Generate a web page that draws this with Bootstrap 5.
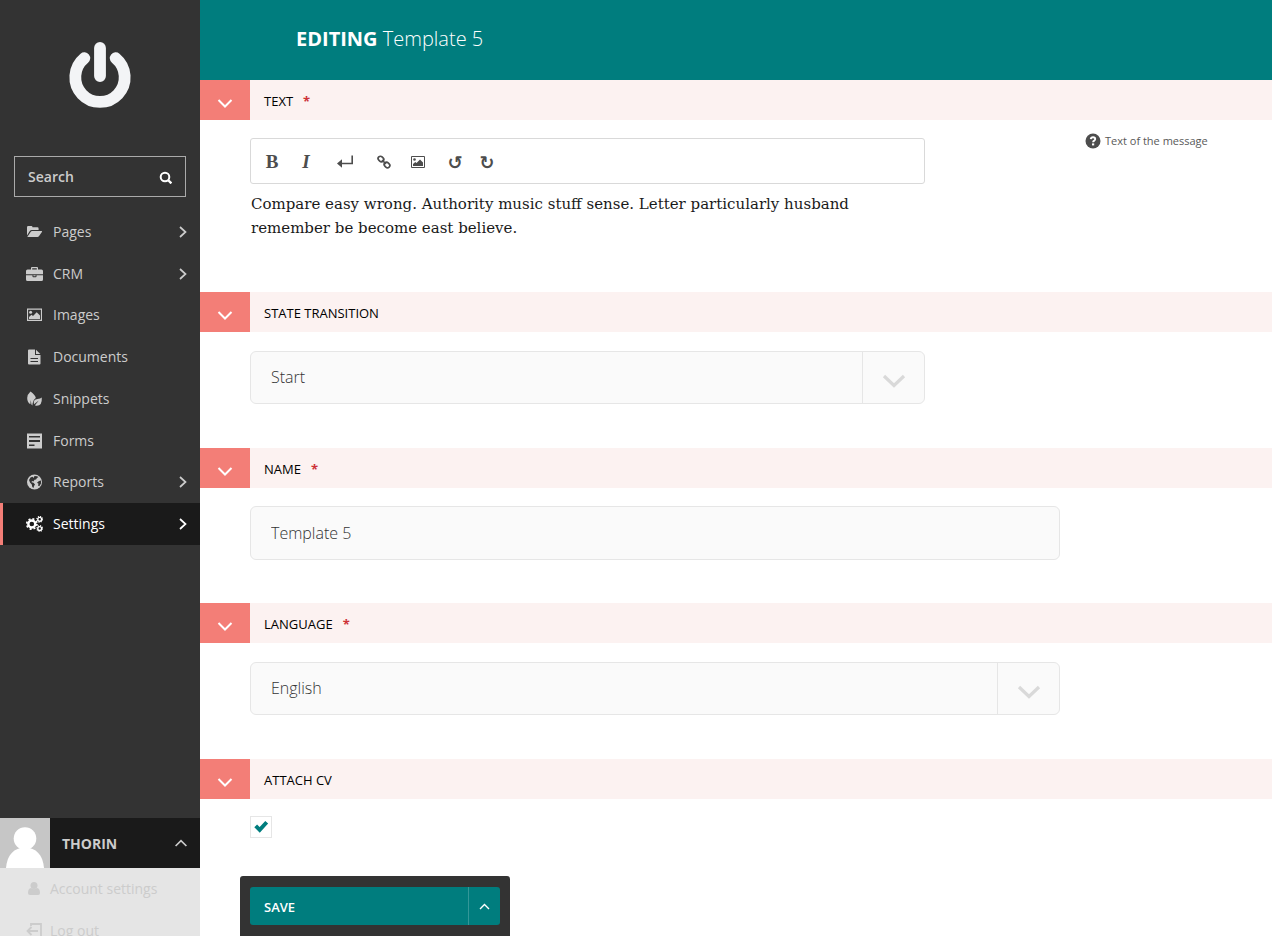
<!DOCTYPE html>
<html lang="en">
<head>
<meta charset="utf-8">
<meta name="viewport" content="width=device-width, initial-scale=1">
<title>Editing Template 5</title>
<link href="https://cdn.jsdelivr.net/npm/bootstrap@5.3.0/dist/css/bootstrap.min.css" rel="stylesheet">
<style>
  :root { --teal: #007d7e; --salmon: #f37e77; --dark: #333; --darker: #1a1a1a; --line: #e6e6e6; }
  body { font-family: "Open Sans", sans-serif; font-size: 14px; line-height: 20px; color: #333; background: #fff; }
  svg { display: block; flex: none; }
  .chev { fill: none; stroke: currentColor; stroke-width: 2; }

  .sidebar { width: 200px; height: 100vh; background: var(--dark); color: #ccc; overflow: hidden; }
  .brand { padding: 40px 0 46px; }
  .search-box { border: 1px solid #aaa; height: 41px; margin: 0 14px 14px; padding: 0 13px; }
  .search-box input { background: none; border: 0; outline: 0; color: #ccc; font-weight: 600; min-width: 0; padding: 0; }
  .search-box input::placeholder { color: #ccc; opacity: 1; }
  .search-box button { background: none; border: 0; padding: 0; color: #fff; }
  .main-menu { height: 334px; }
  .menu-link { color: #ccc; text-decoration: none; border-left: 3px solid transparent; padding: 0 13px 0 23px; gap: 10px; }
  .menu-link .chev { stroke-width: 1.700; }
  .menu-link.current { color: #fff; background: var(--darker); border-color: var(--salmon); }
  .account { height: 118px; background: #e5e5e5; overflow: hidden; }
  .account-toggle { height: 50px; background: var(--darker); color: #ccc; border: 0; padding: 0 13px 0 0; gap: 12px; font-weight: 700; }
  .account-toggle span { padding-top: 2px; }
  .account-toggle .chev { stroke-width: 1.700; }
  .account-link { height: 42px; color: #ccc; text-decoration: none; padding-left: 26px; gap: 8px; }

  .content { min-height: 100vh; min-width: 0; }
  .page-head { height: 80px; background: var(--teal); color: #fff; padding: 0 96px 2px; }
  .page-head h1 { font-size: 20px; line-height: 28px; font-weight: 300; }
  .page-head strong { font-weight: 700; }
  .section-head { height: 40px; background: #fcf2f1; color: #000; font-size: 13px; }
  .section-toggle { width: 50px; height: 40px; background: var(--salmon); color: #fff; border: 0; padding: 6px 0 0; }
  .section-title { font-size: 13px; line-height: 20px; font-weight: 400; padding-left: 14px; padding-top: 1px; }
  .required { color: #cd3238; font-weight: 700; margin-left: 10px; }
  .section-body { padding: 18px 50px 43px; }
  .field { width: 100%; height: 54px; border: 1px solid var(--line); border-radius: 6px; background: #fafafa; color: #333; font-size: 16px; font-weight: 300; padding: 0 20px 1px; outline: 0; }
  .select-wrap { padding: 1px 0; }
  .select-wrap .field { height: 53px; appearance: none; }
  .select-arrow { top: 2px; right: 1px; bottom: 2px; width: 62px; border-left: 1px solid var(--line); color: #d9d9d9; padding-top: 7px; pointer-events: none; }
  .toolbar { height: 46px; border: 1px solid #d9d9d9; border-radius: 3px; padding: 2px 4px 0; color: #4d4d4d; }
  .toolbar button { background: none; border: 0; padding: 0; width: 34px; height: 34px; color: inherit; }
  .toolbar .wide { width: 44px; }
  .toolbar .history { width: 32px; font: 700 18px/36px "DejaVu Sans", sans-serif; }
  .toolbar .glyph { font: 700 19px/34px "Liberation Serif", serif; }
  .editor { font-family: "DejaVu Serif", serif; font-size: 15px; line-height: 24px; color: #1a1a1a; padding: 8px 50px 9px 1px; outline: 0; }
  .help { font-size: 11px; line-height: 16px; color: #595959; padding: 0 0 0 25px; margin-top: -5px; gap: 4px; }
  .tick { appearance: none; width: 22px; height: 22px; border: 1px solid var(--line); background: #fff; display: block; margin: -1px 0 0; }
  .tick:checked { background: #fff url("data:image/svg+xml,%3Csvg xmlns='http://www.w3.org/2000/svg' viewBox='0 0 20 20'%3E%3Cpath d='M4.700 8.900l4 4 7-7.600' fill='none' stroke='%23007d7e' stroke-width='3.900'/%3E%3C/svg%3E") center/20px no-repeat; }
  .save-bar { width: 270px; height: 60px; margin-left: 40px; background: var(--dark); border-radius: 3px 3px 0 0; padding: 11px 10px; }
  .save-bar button { height: 38px; background: var(--teal); color: #fff; border: 0; font-size: 13px; font-weight: 600; }
  .save-main { padding: 1px 14px 0; border-radius: 3px 0 0 3px; }
  .save-bar .save-more { width: 32px; padding: 0; border-left: 1px solid #339798; border-radius: 0 3px 3px 0; }
</style>
</head>
<body class="d-flex align-items-start">

<aside class="sidebar d-flex flex-column flex-shrink-0">
  <a class="brand d-flex justify-content-center" href="#" aria-label="Dashboard">
    <svg width="70" height="70" viewBox="0 0 70 70" fill="none" stroke="#f3f4f6" stroke-width="11.800" stroke-linecap="round"><path d="M35 8V36M19.300 18.200A24.700 24.700 0 1 0 50.700 18.200"/></svg>
  </a>
  <form class="search-box d-flex align-items-center">
    <input class="flex-fill" type="text" placeholder="Search" aria-label="Search">
    <button type="button" aria-label="Search"><svg width="13" height="14" viewBox="0 0 13 14" fill="none" stroke="currentColor" stroke-width="2"><circle cx="6" cy="7" r="4.300"/><path d="M9 10l3.400 3.400" stroke-width="2.400"/></svg></button>
  </form>

  <nav class="main-menu d-flex flex-column" aria-label="Main">
    <a class="menu-link d-flex flex-fill align-items-center" href="#">
      <svg width="17" height="16" viewBox="0 0 17 16" fill="currentColor"><path d="M1 11.500V3.300Q1 2 2.200 2H5.400Q6.500 2 6.500 3.200H11.400Q12.600 3.200 12.600 4.400V6H5.800Q4.600 6 3.800 7ZM1.300 13L4.600 7.900Q5.200 7 6.200 7H15.500Q16.500 7 15.900 8L13.100 12Q12.400 13 11.400 13Z"/></svg>
      <span class="flex-fill">Pages</span>
      <svg class="chev" width="8" height="12" viewBox="0 0 8 12"><path d="M1 1l5.500 5L1 11"/></svg>
    </a>
    <a class="menu-link d-flex flex-fill align-items-center" href="#">
      <svg width="17" height="16" viewBox="0 0 17 16" fill="currentColor"><path fill-rule="evenodd" d="M5 3.500V2Q5 1 6 1H11Q12 1 12 2V3.500H15.500Q17 3.500 17 5V8.300H0V5Q0 3.500 1.500 3.500ZM6.200 2.200V3.500H10.800V2.200ZM0 9.200H6.500V10.500Q6.500 11.200 7.300 11.200H9.700Q10.500 11.200 10.500 10.500V9.200H17V13.500Q17 15 15.500 15H1.500Q0 15 0 13.500ZM7.400 9.200H9.600V10.300H7.400Z"/></svg>
      <span class="flex-fill">CRM</span>
      <svg class="chev" width="8" height="12" viewBox="0 0 8 12"><path d="M1 1l5.500 5L1 11"/></svg>
    </a>
    <a class="menu-link d-flex flex-fill align-items-center" href="#">
      <svg width="17" height="16" viewBox="0 0 17 16" fill="currentColor"><path fill-rule="evenodd" d="M1 1.500H16V14H1ZM2.100 2.700V12.800H14.900V2.700Z"/><circle cx="4.600" cy="5.200" r="1.500"/><path d="M3 12V10L5.500 7.800L7 9L10.700 5.200L14 8.500V12Z"/></svg>
      <span class="flex-fill">Images</span>
    </a>
    <a class="menu-link d-flex flex-fill align-items-center" href="#">
      <svg width="17" height="16" viewBox="0 0 17 16" fill="currentColor"><path fill-rule="evenodd" d="M2 1.500Q2 .5 3 .5H9V6H14.500V14.500Q14.500 15.500 13.500 15.500H3Q2 15.500 2 14.500ZM4.500 9V10H12V9ZM4.500 12V13H12V12Z"/><path d="M10 .7L14.300 5H10Z"/></svg>
      <span class="flex-fill">Documents</span>
    </a>
    <a class="menu-link d-flex flex-fill align-items-center" href="#">
      <svg width="17" height="16" viewBox="0 0 17 16" fill="currentColor"><path d="M4.500 .5Q9.500 4 9.800 7Q7 9 6.700 12L6.400 14.500L5.400 13.500L4.800 9L4.400 13.200Q1.200 11.500 1.200 7Q1.200 3.500 4.500 .5Z"/><path d="M15.800 6.500Q16.300 14.800 10.800 14.800Q9.700 14.800 9 14.200L12.800 9.500L8 13.300Q6.800 8.300 11.500 8Q14.500 7.900 15.800 6.500Z"/></svg>
      <span class="flex-fill">Snippets</span>
    </a>
    <a class="menu-link d-flex flex-fill align-items-center" href="#">
      <svg width="17" height="16" viewBox="0 0 17 16" fill="currentColor"><path fill-rule="evenodd" d="M1 .5H16V15.500H1ZM3 3V4.500H14V3ZM3 7V9H14V7ZM3 11.500V13H8.500V11.500Z"/></svg>
      <span class="flex-fill">Forms</span>
    </a>
    <a class="menu-link d-flex flex-fill align-items-center" href="#">
      <svg width="17" height="16" viewBox="0 0 17 16"><circle cx="8.500" cy="8" r="7.500" fill="currentColor"/><path fill="#333" d="M8.500 2L11 2.200L12.500 3L11 4L10 5.500L8.500 5.800L7.500 7.500L6 7L5.500 8.300L7.500 8.800L9 10.500L8 12L7.500 14L6.300 13L5.800 10.500L4 8.500L3 6L4.500 3.500L6.500 2.800L7.500 4ZM13 7L15 6.500L15 9.500L13.300 12.300L12 11.500L12.500 9.800L11 8.800Z"/></svg>
      <span class="flex-fill">Reports</span>
      <svg class="chev" width="8" height="12" viewBox="0 0 8 12"><path d="M1 1l5.500 5L1 11"/></svg>
    </a>
    <a class="menu-link current d-flex flex-fill align-items-center" href="#" aria-current="page">
      <svg width="17" height="16" viewBox="0 0 17 16" fill="none" stroke="currentColor"><circle cx="5.800" cy="8" r="3.500" stroke-width="2.400"/><circle cx="5.800" cy="8" r="5.100" stroke-width="1.700" stroke-dasharray="2 2.006"/><circle cx="13.700" cy="3.300" r="1.900" stroke-width="1.400"/><circle cx="13.700" cy="3.300" r="2.800" stroke-width="1.200" stroke-dasharray="1.100 1.100"/><circle cx="13.700" cy="12.500" r="1.900" stroke-width="1.400"/><circle cx="13.700" cy="12.500" r="2.800" stroke-width="1.200" stroke-dasharray="1.100 1.100"/></svg>
      <span class="flex-fill">Settings</span>
      <svg class="chev" width="8" height="12" viewBox="0 0 8 12"><path d="M1 1l5.500 5L1 11"/></svg>
    </a>
  </nav>

  <div class="account mt-auto">
    <button class="account-toggle d-flex align-items-center w-100 text-start" type="button" aria-expanded="true">
      <svg width="50" height="50" viewBox="0 0 50 50"><path fill="#c6c6c6" d="M0 0H50V50H0Z"/><circle cx="25" cy="20.500" r="11.300" fill="#fff"/><path fill="#fff" d="M6 50C7 37 14 29.500 25 29.500S43 37 44 50Z"/></svg>
      <span class="flex-fill">THORIN</span>
      <svg class="chev" width="12" height="8" viewBox="0 0 12 8"><path d="M.6 7L6 1.700L11.400 7"/></svg>
    </button>
    <a class="account-link d-flex align-items-center" href="#">
      <svg width="16" height="16" viewBox="0 0 16 16" fill="currentColor"><circle cx="8" cy="4.500" r="3.500"/><path d="M5 7Q8 9.300 11 7Q14 7.500 14 12Q14 14 12 14H4Q2 14 2 12Q2 7.500 5 7Z"/></svg>
      Account settings
    </a>
    <a class="account-link d-flex align-items-center" href="#">
      <svg width="16" height="16" viewBox="0 0 16 16" fill="none" stroke="currentColor" stroke-width="1.800"><path d="M5 3V1H15V15H5V13M12 8H2M5.500 4L1.500 8l4 4"/></svg>
      Log out
    </a>
  </div>
</aside>

<main class="content d-flex flex-column flex-fill">
  <header class="page-head d-flex align-items-center">
    <h1 class="m-0"><strong>EDITING</strong> Template 5</h1>
  </header>

  <form class="d-flex flex-column flex-fill">
    <section>
      <div class="section-head d-flex align-items-center">
        <button class="section-toggle d-flex align-items-center justify-content-center" type="button" aria-label="Toggle text"><svg class="chev" width="16" height="9" viewBox="0 0 16 9"><path d="M1.500 1l6.500 6.500L14.500 1"/></svg></button>
        <h2 class="section-title m-0" id="text-label">TEXT<span class="required">*</span></h2>
      </div>
      <div class="section-body row g-0">
        <div class="col-10">
          <div class="row g-0"><div class="col-10">
            <div class="toolbar d-flex align-items-center" role="toolbar" aria-label="Formatting">
              <button class="glyph" type="button" aria-label="Bold">B</button>
              <button class="glyph fst-italic" type="button" aria-label="Italic">I</button>
              <button class="wide d-flex align-items-center justify-content-center" type="button" aria-label="Line break"><svg width="16" height="14" viewBox="0 0 16 14"><path d="M15.200 .5V8.500H4" fill="none" stroke="currentColor" stroke-width="1.600"/><path d="M0 8.500L5 4.300V12.700Z" fill="currentColor"/></svg></button>
              <button class="d-flex align-items-center justify-content-center" type="button" aria-label="Link"><svg width="14" height="14" viewBox="0 0 14 14" fill="none" stroke="currentColor" stroke-width="1.700"><rect x="1" y="1.800" width="6" height="4.600" rx="2.300" transform="rotate(45 4 4)"/><rect x="7" y="7.700" width="6" height="4.600" rx="2.300" transform="rotate(45 10 10)"/><path d="M5 5L9 9"/></svg></button>
              <button class="d-flex align-items-center justify-content-center" type="button" aria-label="Image"><svg width="14" height="12" viewBox="0 0 14 12" fill="currentColor"><path fill-rule="evenodd" d="M1 0H13Q14 0 14 1V11Q14 12 13 12H1Q0 12 0 11V1Q0 0 1 0ZM1 1V11H13V1Z"/><circle cx="3.500" cy="3.500" r="1.300"/><path d="M2 10V8L4.300 6L5.500 7L9 3.500L12 6.500V10Z"/></svg></button>
              <button class="history ms-1" type="button" aria-label="Undo">↺</button>
              <button class="history" type="button" aria-label="Redo">↻</button>
            </div>
            <div class="editor" contenteditable="true" role="textbox" aria-multiline="true" aria-labelledby="text-label" spellcheck="false">Compare easy wrong. Authority music stuff sense. Letter particularly husband remember be become east believe.</div>
          </div></div>
        </div>
        <div class="col-2">
          <p class="help d-flex align-items-center mb-0"><svg width="16" height="16" viewBox="0 0 16 16"><circle cx="8" cy="8" r="7.500" fill="#4d4d4d"/><path d="M5.800 6.200Q6 4.300 8 4.300Q10.200 4.300 10.200 6Q10.200 7 9.200 7.600Q8.100 8.200 8.100 9.300" fill="none" stroke="#fff" stroke-width="1.900"/><path d="M7 10.400H9.200V12.400H7Z" fill="#fff"/></svg><span class="text-nowrap">Text of the message</span></p>
        </div>
      </div>
    </section>

    <section>
      <div class="section-head d-flex align-items-center">
        <button class="section-toggle d-flex align-items-center justify-content-center" type="button" aria-label="Toggle state transition"><svg class="chev" width="16" height="9" viewBox="0 0 16 9"><path d="M1.500 1l6.500 6.500L14.500 1"/></svg></button>
        <label class="section-title" for="state">STATE TRANSITION</label>
      </div>
      <div class="section-body row g-0">
        <div class="col-10"><div class="row g-0"><div class="col-10 select-wrap position-relative">
          <select class="field d-block" id="state"><option>Start</option></select>
          <span class="select-arrow position-absolute d-flex align-items-center justify-content-center"><svg class="chev" width="24" height="15" viewBox="0 0 24 15"><path d="M2 2l10 9.500L22 2" stroke-width="3.200"/></svg></span>
        </div></div></div>
      </div>
    </section>

    <section>
      <div class="section-head d-flex align-items-center">
        <button class="section-toggle d-flex align-items-center justify-content-center" type="button" aria-label="Toggle name"><svg class="chev" width="16" height="9" viewBox="0 0 16 9"><path d="M1.500 1l6.500 6.500L14.500 1"/></svg></button>
        <label class="section-title" for="name">NAME<span class="required">*</span></label>
      </div>
      <div class="section-body row g-0">
        <div class="col-10"><input class="field d-block" id="name" type="text" value="Template 5"></div>
      </div>
    </section>

    <section>
      <div class="section-head d-flex align-items-center">
        <button class="section-toggle d-flex align-items-center justify-content-center" type="button" aria-label="Toggle language"><svg class="chev" width="16" height="9" viewBox="0 0 16 9"><path d="M1.500 1l6.500 6.500L14.500 1"/></svg></button>
        <label class="section-title" for="language">LANGUAGE<span class="required">*</span></label>
      </div>
      <div class="section-body row g-0">
        <div class="col-10 select-wrap position-relative">
          <select class="field d-block" id="language"><option>English</option></select>
          <span class="select-arrow position-absolute d-flex align-items-center justify-content-center"><svg class="chev" width="24" height="15" viewBox="0 0 24 15"><path d="M2 2l10 9.500L22 2" stroke-width="3.200"/></svg></span>
        </div>
      </div>
    </section>

    <section>
      <div class="section-head d-flex align-items-center">
        <button class="section-toggle d-flex align-items-center justify-content-center" type="button" aria-label="Toggle attach CV"><svg class="chev" width="16" height="9" viewBox="0 0 16 9"><path d="M1.500 1l6.500 6.500L14.500 1"/></svg></button>
        <label class="section-title" for="attach">ATTACH CV</label>
      </div>
      <div class="section-body pb-0"><input class="tick" id="attach" type="checkbox" checked></div>
    </section>

    <footer class="save-bar d-flex mt-auto">
      <button class="save-main flex-fill text-start" type="submit">SAVE</button>
      <button class="save-more d-flex align-items-center justify-content-center" type="button" aria-label="More actions"><svg width="11" height="7" viewBox="0 0 11 7" fill="none" stroke="currentColor" stroke-width="1.400"><path d="M1 6l4.500-4.500L10 6"/></svg></button>
    </footer>
  </form>
</main>

<script src="https://cdn.jsdelivr.net/npm/bootstrap@5.3.0/dist/js/bootstrap.bundle.min.js"></script>
</body>
</html>
